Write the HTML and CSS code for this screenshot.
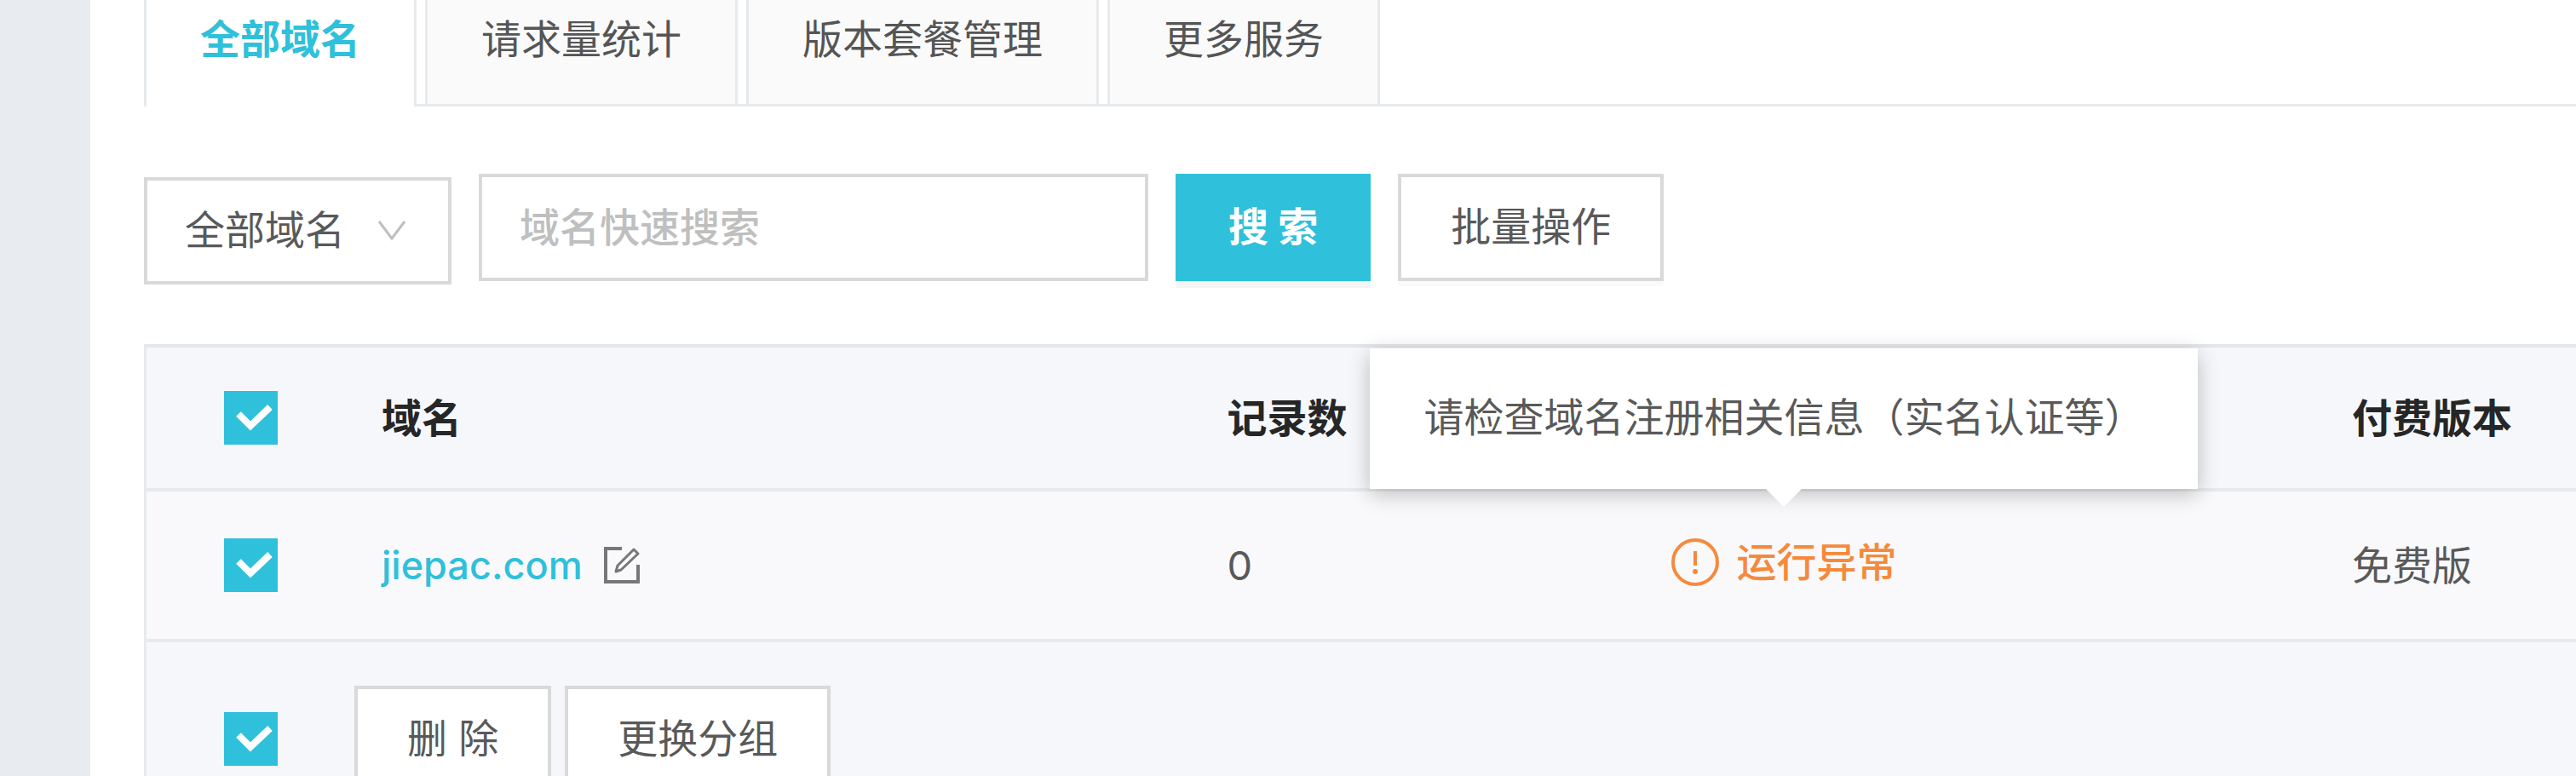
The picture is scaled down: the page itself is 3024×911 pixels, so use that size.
FILE: index.html
```html
<!DOCTYPE html>
<html lang="zh-CN">
<head>
  <meta charset="UTF-8">
  <title>全部域名</title>

  <link rel="stylesheet" href="styles.css">
</head>
<body>

  <div class="layout">
    <aside class="sidebar"></aside>

    <main class="content">

      <!-- Tabs -->
      <nav class="tabs">
        <a class="tab active" href="#all">全部域名</a>
        <a class="tab" href="#stats">请求量统计</a>
        <a class="tab" href="#plans">版本套餐管理</a>
        <a class="tab" href="#more">更多服务</a>
      </nav>

      <!-- Filter and search -->
      <form class="toolbar">
        <select class="group-select" aria-label="域名分组">
          <option>全部域名</option>
        </select>
        <input class="search-input" type="text" placeholder="域名快速搜索" aria-label="域名快速搜索">
        <button class="btn btn-primary" type="button">搜 索</button>
        <button class="btn" type="button">批量操作</button>
      </form>

      <!-- Domain list -->
      <table class="domains">
        <colgroup>
          <col class="col-check">
          <col class="col-name">
          <col class="col-records">
          <col class="col-status">
          <col>
        </colgroup>
        <thead>
          <tr>
            <th class="check-cell"><input class="checkbox" type="checkbox" aria-label="全选" checked></th>
            <th>域名</th>
            <th>记录数</th>
            <th></th>
            <th>付费版本</th>
          </tr>
        </thead>
        <tbody>
          <tr>
            <td class="check-cell"><input class="checkbox" type="checkbox" aria-label="jiepac.com" checked></td>
            <td>
              <div class="name">
                <a class="domain-link" href="#jiepac.com">jiepac.com</a>
                <button class="edit" type="button" aria-label="编辑">
                  <svg class="edit-icon" viewBox="0 0 44 46" fill="none" stroke="#777" stroke-width="4">
                    <path d="M22 3H3V42H41V22"/>
                    <path d="M36 4L41 9L21 28L15 30L17 23Z" stroke-width="3" stroke-linejoin="round"/>
                  </svg>
                </button>
              </div>
            </td>
            <td>0</td>
            <td>
              <div class="status">
                <svg class="status-icon" viewBox="0 0 56 56" fill="none" stroke="#f58a3c">
                  <circle cx="28" cy="28" r="26" stroke-width="4"/>
                  <path d="M28 15V32" stroke-width="4"/>
                  <circle cx="28" cy="39" r="3" fill="#f58a3c" stroke="none"/>
                </svg>
                <span>运行异常</span>
                <div class="tooltip" role="tooltip">请检查域名注册相关信息（实名认证等）</div>
              </div>
            </td>
            <td>免费版</td>
          </tr>
        </tbody>
        <tfoot>
          <tr>
            <td class="check-cell"><input class="checkbox" type="checkbox" aria-label="全选" checked></td>
            <td class="actions-cell" colspan="4">
              <div class="actions">
                <button class="btn" type="button">删 除</button>
                <button class="btn" type="button">更换分组</button>
              </div>
            </td>
          </tr>
        </tfoot>
      </table>

    </main>
  </div>

</body>
</html>
```
FILE: styles.css
```css
* {
  box-sizing: border-box;
}

body {
  background-color: #fff;
  color: #595959;
  font-family: Inter, "Noto Sans CJK SC", sans-serif;
  font-size: 47px;
  line-height: 64px;
  margin: 0;
}

a {
  text-decoration: none;
}

button,
input,
select {
  border-radius: 0;
  color: inherit;
  font: inherit;
  margin: 0;
}

.layout {
  display: flex;
  height: 100vh;
  overflow: hidden;
}

.sidebar {
  background-color: #e8ebf0;
  flex: 0 0 106px;
}

.content {
  flex: 1;
  min-width: 0;
  padding-left: 63px;
}

/* Tabs */
.tabs {
  align-items: flex-start;
  border-bottom: 3px solid #e7eaed;
  display: flex;
  gap: 10px;
}

.tab {
  background-color: #fafafa;
  border: solid #e7eaed;
  border-width: 0 3px;
  color: #555;
  padding: 14px 63px 44px;
  white-space: nowrap;
}

.tab.active {
  background-color: #fff;
  color: #2fc0db;
  font-weight: 700;
  margin-bottom: -3px;
  padding-bottom: 47px;
}

/* Toolbar */
.toolbar {
  align-items: flex-start;
  display: flex;
  gap: 32px;
  padding: 79px 0 70px;
}

.group-select,
.search-input {
  background-color: #fff;
  border: 4px solid #d9d9d9;
  height: 126px;
  padding: 0 44px 2px;
}

.group-select {
  appearance: none;
  background-image: url('data:image/svg+xml,<svg xmlns="http://www.w3.org/2000/svg" viewBox="0 0 34 26" fill="none" stroke="%23bfbfbf" stroke-width="3"><path d="M2 2L17 22L32 2"/></svg>');
  background-position: right 49px center;
  background-repeat: no-repeat;
  background-size: 34px 26px;
  margin-top: 4px;
  width: 361px;
}

.search-input {
  width: 786px;
}

.search-input::placeholder {
  color: #bfbfbf;
  font-weight: 500;
  opacity: 1;
}

.btn {
  background-color: #fff;
  border: 4px solid #d9d9d9;
  box-shadow: 0 6px 0 rgba(0, 0, 0, 0.02);
  height: 126px;
  padding: 0 58px 2px;
  white-space: nowrap;
}

.btn-primary {
  background-color: #2fc0db;
  border-color: #2fc0db;
  box-shadow: 0 8px 0 rgba(0, 0, 0, 0.04);
  color: #fff;
  font-weight: 700;
}

/* Domain table */
.domains {
  border-left: 3px solid #e7eaed;
  border-spacing: 0;
  border-top: 4px solid #e4e6e9;
  table-layout: fixed;
  width: 100%;
}

.col-check {
  width: 244px;
}

.col-name {
  width: 34.8%;
}

.col-records {
  width: 18.3%;
}

.col-status {
  width: 28%;
}

.domains th,
.domains td {
  border-bottom: 4px solid #e7e9ec;
  padding: 0 0 0 32px;
  text-align: left;
  vertical-align: middle;
}

.domains th {
  background-color: #f5f7fb;
  color: #262626;
  font-weight: 700;
  height: 169px;
}

.domains td {
  background-color: #f9f9fb;
  height: 177px;
}

.domains tfoot td {
  background-color: #f5f7fb;
  height: 231px;
}

.domains .check-cell {
  padding-left: 91px;
}

.domains .actions-cell {
  padding-left: 0;
}

.checkbox {
  appearance: none;
  background-color: #fff;
  border: 3px solid #d9d9d9;
  display: block;
  height: 63px;
  width: 63px;
}

.checkbox:checked {
  background: #2fc0db url('data:image/svg+xml,<svg xmlns="http://www.w3.org/2000/svg" viewBox="0 0 63 63" fill="none" stroke="white" stroke-width="8"><path d="M17 27L31 41L54 19"/></svg>') center / 63px 63px no-repeat;
  border: 0;
}

.name {
  align-items: center;
  display: flex;
  gap: 24px;
}

.domain-link {
  color: #2fc0db;
  font-size: 45px;
  font-weight: 500;
}

.edit {
  background: none;
  border: 0;
  padding: 0;
}

.edit-icon {
  display: block;
  height: 46px;
  width: 44px;
}

.status {
  align-items: center;
  color: #f58a3c;
  display: inline-flex;
  font-weight: 500;
  gap: 20px;
  padding-bottom: 8px;
  position: relative;
  vertical-align: middle;
}

.status-icon {
  height: 56px;
  width: 56px;
}

/* Sits above the status it explains */
.tooltip {
  background-color: #fff;
  bottom: calc(100% + 54px);
  box-shadow: 0 6px 24px rgba(0, 0, 0, 0.24);
  color: #595959;
  font-weight: 400;
  left: 50%;
  padding: 49px 63px 52px;
  position: absolute;
  transform: translateX(-50%);
  white-space: nowrap;
}

.tooltip::after {
  border: 21px solid transparent;
  border-bottom-width: 0;
  border-top-color: #fff;
  content: "";
  left: 50%;
  margin-left: -21px;
  position: absolute;
  top: 100%;
}

.actions {
  display: flex;
  gap: 16px;
}
```
